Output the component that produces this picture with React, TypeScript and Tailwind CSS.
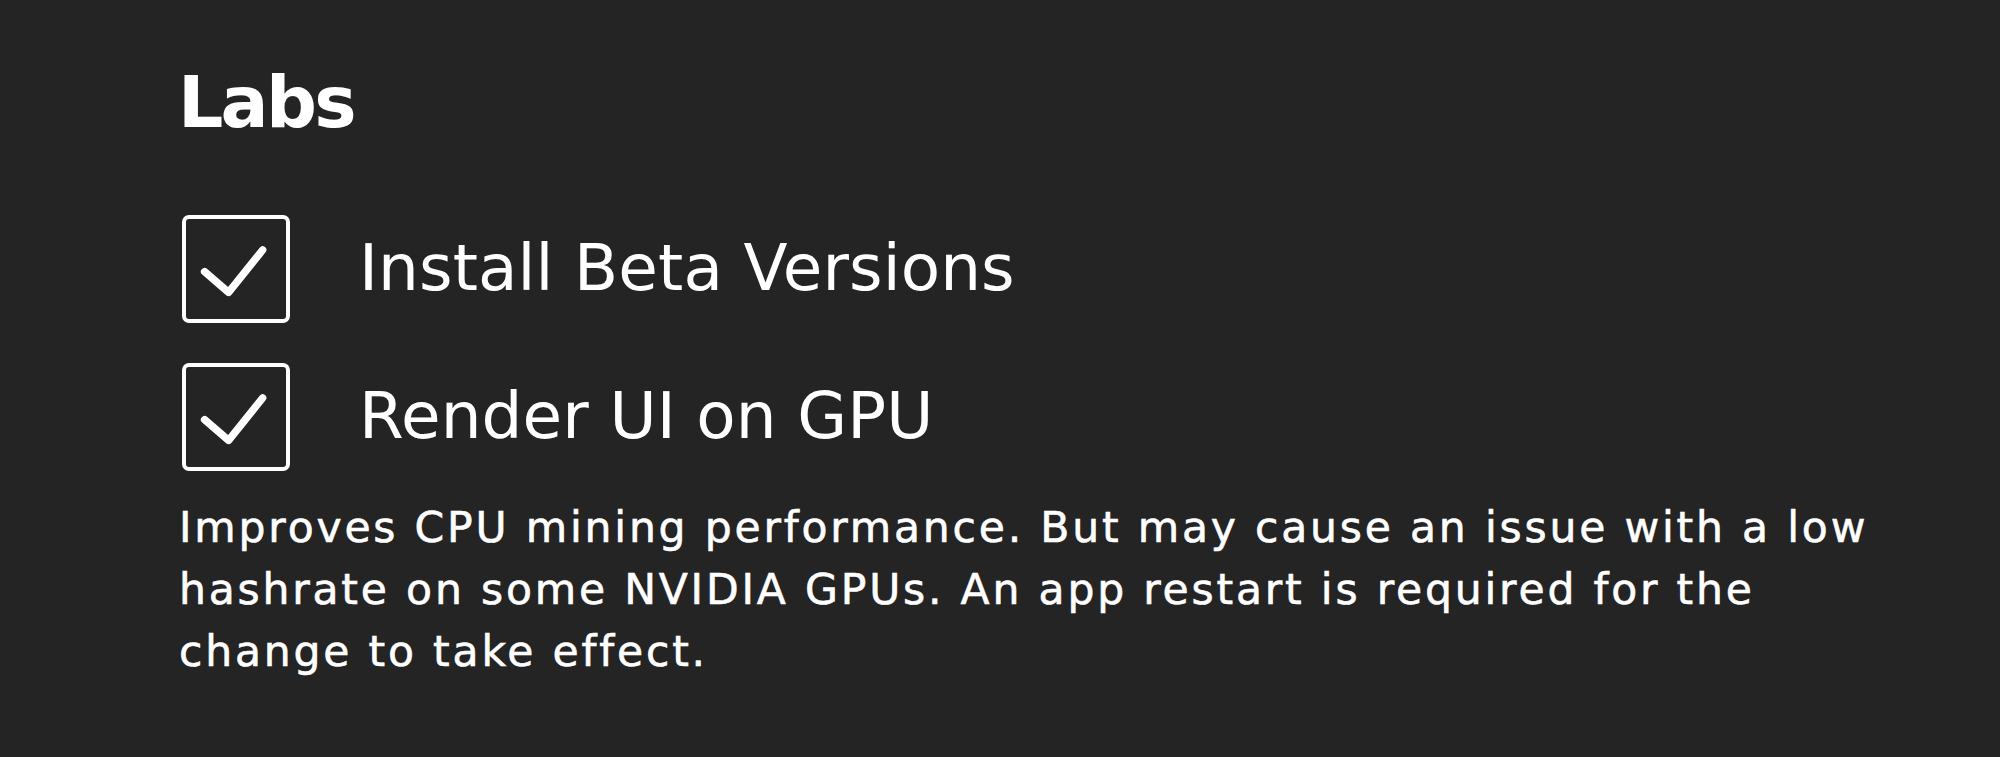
import React from "react";

function CheckBox() {
  return (
    <div className="w-[108px] h-[108px] shrink-0 rounded-[7px] border-4 border-white">
      <svg width="100" height="100" viewBox="0 0 100 100" className="block">
        <path
          d="M18.6 52.7 L42.6 73.3 L76.6 31"
          fill="none"
          stroke="white"
          strokeWidth="7.5"
          strokeLinecap="round"
          strokeLinejoin="round"
        />
      </svg>
    </div>
  );
}

function Row({ label }: { label: string }) {
  return (
    <div className="flex items-center gap-[69px]">
      <CheckBox />
      <span className="text-[64.4px] leading-none tracking-[0.1px] text-white pb-[3px]">{label}</span>
    </div>
  );
}

export default function App() {
  return (
    <div
      className="min-h-screen w-full bg-[#242424] pl-[182px] pt-[67px] text-white"
      style={{ fontFamily: '"DejaVu Sans", sans-serif' }}
    >
      <h2 className="ml-[-4px] text-[71.2px] font-bold leading-none tracking-[-2.74px]">Labs</h2>
      <div className="mt-[77px] flex flex-col gap-[40px]">
        <Row label="Install Beta Versions" />
        <Row label="Render UI on GPU" />
      </div>
      <p className="ml-[-3px] mt-[26px] w-[1760px] text-[42.5px] leading-[62px] tracking-[2.8px] [-webkit-text-stroke:0.6px_white]">
        Improves CPU mining performance. But may cause an issue with a low hashrate on some NVIDIA GPUs. An app
        restart is required for the change to take effect.
      </p>
    </div>
  );
}
